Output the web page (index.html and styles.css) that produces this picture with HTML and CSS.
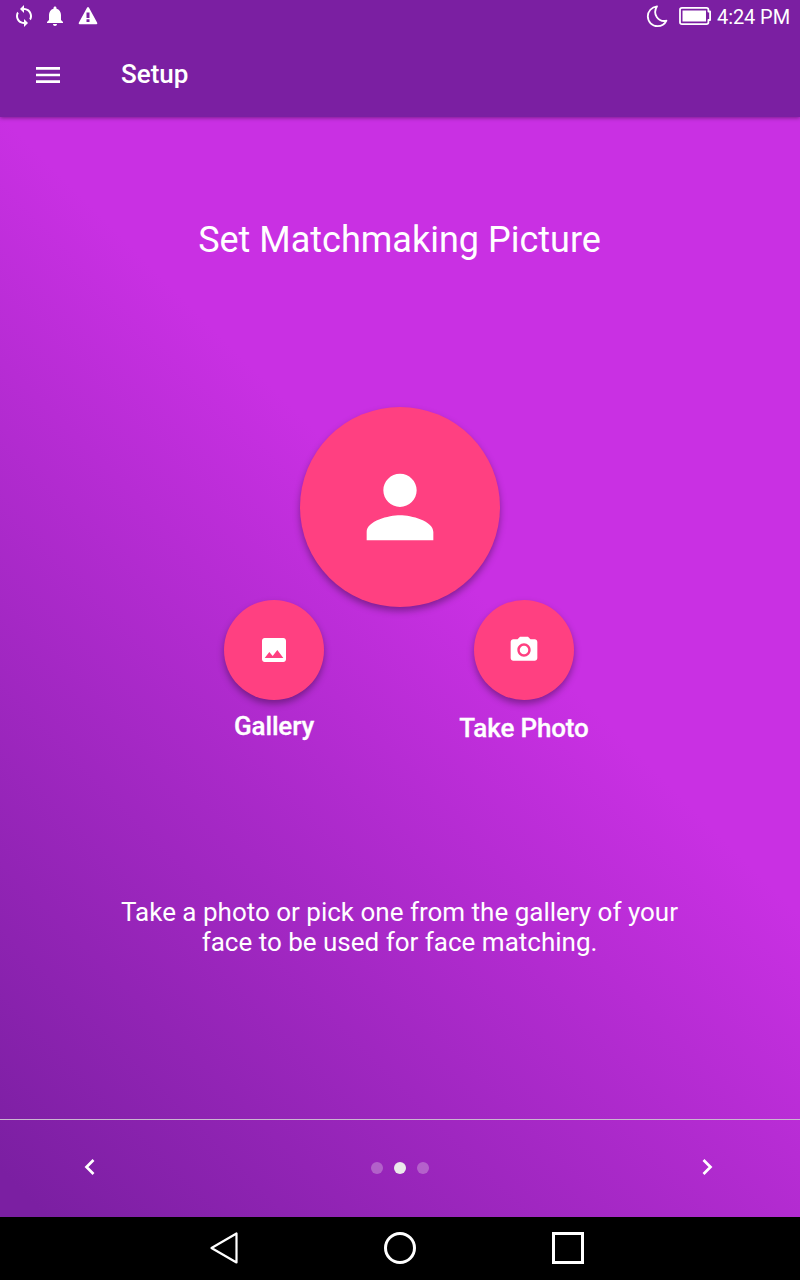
FILE: index.html
```html
<!DOCTYPE html>
<html lang="en">
<head>
<meta charset="utf-8">
<title>Setup</title>
<link rel="stylesheet" href="styles.css">
</head>
<body>
<div class="screen">
  <header class="top">
    <div class="status">
      <svg class="sync" width="24" height="24" viewBox="0 0 24 24"><path d="M12 4V1L8 5l4 4V6c3.31 0 6 2.69 6 6 0 1.01-.25 1.97-.7 2.8l1.46 1.46C19.54 15.03 20 13.57 20 12c0-4.42-3.58-8-8-8zm0 14c-3.31 0-6-2.69-6-6 0-1.01.25-1.97.7-2.8L5.24 7.74C4.46 8.97 4 10.43 4 12c0 4.42 3.58 8 8 8v3l4-4-4-4v3z"/></svg>
      <svg class="bell" width="24" height="24" viewBox="0 0 24 24"><path d="M12 22c1.1 0 2-.9 2-2h-4c0 1.1.89 2 2 2zm6-6v-5c0-3.07-1.64-5.64-4.5-6.32V4c0-.83-.67-1.500-1.500-1.500s-1.500.67-1.500 1.500v.68C7.630 5.360 6 7.920 6 11v5l-2 2v1h16v-1l-2-2z"/></svg>
      <svg class="warn" width="20" height="20" viewBox="0 0 20 20"><path fill-rule="evenodd" d="M9 1.800Q10 .4 11 1.800L19.200 16.800Q19.800 18.300 18.200 18.300H1.800Q.2 18.300.8 16.800zM8.500 6.500v5.500h3V6.500zM8.500 13.300v2.600h3v-2.600z"/></svg>
      <svg class="moon" width="24" height="24" viewBox="0 0 24 24"><path class="line" d="M12 2.300C6.500 3 2.800 7.500 2.800 12.300c0 5.600 4.300 9.900 9.700 9.900 4 0 7.300-2 9-5.500C13.500 18.500 7 10.500 12 2.300z"/></svg>
      <svg class="battery" width="33" height="20" viewBox="0 0 33 20"><path class="line" d="M3 1.900h24.500Q29.400 1.900 29.400 3.800V5.500h1.700v8.500h-1.700v2.300q0 1.800-1.900 1.800H3Q1 18.100 1 16.300V3.800Q1 1.900 3 1.900z"/><rect x="3.500" y="4.500" width="23.500" height="11"/></svg>
      <span class="time">4:24 PM</span>
    </div>
    <div class="toolbar">
      <svg width="24" height="18" viewBox="0 0 24 18"><path d="M0 1h24v2.700H0zM0 7.700h24v2.600H0zM0 14.300h24V17H0z"/></svg>
      <h1>Setup</h1>
    </div>
  </header>
  <main class="content">
    <h2>Set Matchmaking Picture</h2>
    <div class="avatar">
      <svg width="100" height="100" viewBox="0 0 24 24"><path d="M12 12c2.210 0 4-1.790 4-4s-1.790-4-4-4-4 1.790-4 4 1.790 4 4 4zm0 2c-2.670 0-8 1.340-8 4v2h16v-2c0-2.660-5.330-4-8-4z"/></svg>
    </div>
    <div class="choices">
      <div class="choice">
        <div class="fab"><svg width="32" height="32" viewBox="0 0 24 24"><path d="M21 19V5c0-1.100-.9-2-2-2H5c-1.100 0-2 .9-2 2v14c0 1.100.9 2 2 2h14c1.100 0 2-.9 2-2zM8.500 13.500l2.500 3.010L14.500 12l4.500 6H5l3.500-4.500z"/></svg></div>
        <span class="label gallery">Gallery</span>
      </div>
      <div class="choice">
        <div class="fab"><svg width="32" height="32" viewBox="0 0 24 24"><path fill-rule="evenodd" d="M9 2 7.170 4H4c-1.100 0-2 .9-2 2v12c0 1.100.9 2 2 2h16c1.100 0 2-.9 2-2V6c0-1.100-.9-2-2-2h-3.170L15 2H9zm3 15c-2.760 0-5-2.240-5-5s2.240-5 5-5 5 2.240 5 5-2.240 5-5 5z"/><circle cx="12" cy="12" r="3.200"/></svg></div>
        <span class="label photo">Take Photo</span>
      </div>
    </div>
    <p>Take a photo or pick one from the gallery of your<br>face to be used for face matching.</p>
  </main>
  <footer class="pager">
    <svg width="12" height="18" viewBox="0 0 12 18"><path class="chev" d="M9.500 2 2.500 9l7 7"/></svg>
    <div class="dots"><i></i><i class="on"></i><i></i></div>
    <svg width="12" height="18" viewBox="0 0 12 18"><path class="chev" d="M2.500 2l7 7-7 7"/></svg>
  </footer>
  <nav class="nav">
    <svg width="32" height="34" viewBox="0 0 32 34"><path class="key" d="M3.500 17 28.500 2.500v29z"/></svg>
    <svg width="32" height="32" viewBox="0 0 32 32"><circle class="ring" cx="16" cy="16" r="14.500"/></svg>
    <svg width="32" height="32" viewBox="0 0 32 32"><rect class="ring" x="1.500" y="1.500" width="29" height="29"/></svg>
  </nav>
</div>
</body>
</html>
```
FILE: styles.css
```css
* { box-sizing: border-box; }
body { margin: 0; font-family: Roboto, sans-serif; color: #fff; }
svg { display: block; fill: #fff; flex: none; }
h1, h2, p { margin: 0; }
.screen {
  width: 800px; height: 1280px; overflow: hidden;
  display: grid; grid-template-rows: 117px 1002px 98px 63px;
  background: linear-gradient(45deg, #7b1fa2 2.500%, #c930e3 58%) 0 117px / 800px 1100px no-repeat #000;
}
.top { background: #7b1fa2; box-shadow: 0 1px 4px rgba(0, 0, 0, .4); }
.status { height: 33px; display: flex; align-items: center; padding: 0 10px 1px 12px; }
.bell { margin-left: 7px; }
.warn { margin-left: 11px; }
.moon { margin-left: auto; }
.battery { margin-left: 10px; }
.time { margin-left: 5px; padding-top: 2px; font-size: 20px; line-height: 32px; letter-spacing: -.1px; }
.line { fill: none; stroke: #fff; stroke-width: 1.800; stroke-linejoin: round; }
.toolbar { height: 84px; display: flex; align-items: center; padding-left: 36px; gap: 61px; }
h1 { font-size: 26px; font-weight: 500; line-height: 82px; padding-bottom: 2px; }
.content { display: flex; flex-direction: column; align-items: center; }
h2 { font-size: 36px; font-weight: 400; line-height: 42px; margin: 102px 1px 0 0; }
.avatar, .fab {
  border-radius: 50%; background: #ff4081; display: grid; place-items: center;
  box-shadow: 0 4px 7px rgba(0, 0, 0, .34);
}
.avatar { width: 200px; height: 200px; margin-top: 146px; }
.choices { width: 500px; display: flex; margin: -7px 0 0 -2px; }
.choice { width: 250px; display: flex; flex-direction: column; align-items: center; }
.fab { width: 100px; height: 100px; }
.label { font-size: 26px; font-weight: 500; line-height: 30px; letter-spacing: -.15px; white-space: nowrap; -webkit-text-stroke: .3px #fff; }
.gallery { margin-top: 11px; }
.photo { margin-top: 13px; }
p { font-size: 26px; line-height: 30px; text-align: center; margin: 154px 1px 0 0; white-space: nowrap; }
.pager {
  border-top: 1px solid #cab7d0; display: flex; align-items: center;
  justify-content: space-between; padding: 0 87px 2px 84px;
}
.pager svg { margin-bottom: 1px; }
.chev { fill: none; stroke: #fff; stroke-width: 2.700; }
.dots { display: flex; gap: 11px; padding-left: 2px; }
.dots i { width: 12px; height: 12px; border-radius: 50%; background: rgba(235, 225, 235, .32); }
.dots .on { background: #ebe9eb; }
.nav { background: #000; display: flex; justify-content: flex-end; align-items: center; gap: 136px; padding: 0 216px 1px 0; }
.nav svg:first-child { margin-right: 8px; }
.ring { fill: none; stroke: #fff; stroke-width: 3; }
.key { fill: none; stroke: #fff; stroke-width: 2.200; stroke-linejoin: round; }
```
